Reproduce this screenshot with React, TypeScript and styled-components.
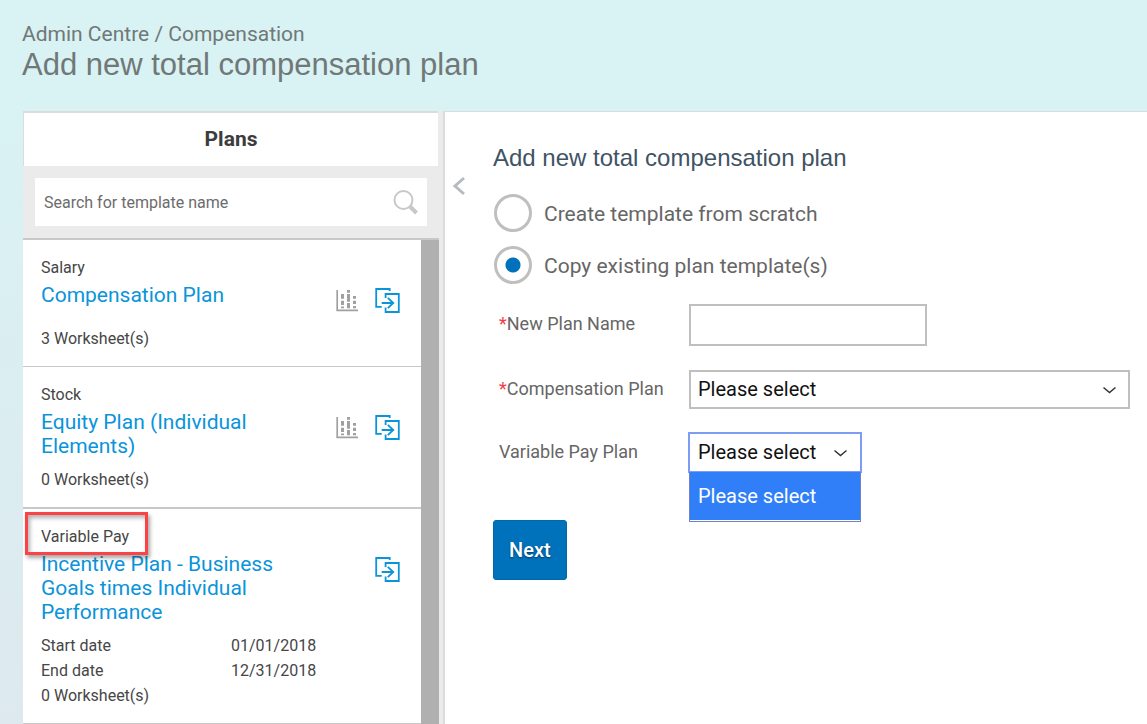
import React, { useState } from "react";
import styled, { createGlobalStyle, css } from "styled-components";

const GlobalStyle = createGlobalStyle`
  *, *::before, *::after { box-sizing: border-box; }
  body { margin: 0; background: #d9f2f3; }
  body, button, input, select { font-family: Roboto, "Liberation Sans", sans-serif; }
`;

const Page = styled.div`
  display: flex;
  flex-direction: column;
  min-height: 100vh;
  background: linear-gradient(#d9f2f3 0, #d9f2f3 112px, #dde9ee 724px);
`;

const PageHeader = styled.header`
  height: 111px;
  padding: 22px 22px 0;
  background: #d9f2f3;
  color: #707878;
`;

const Breadcrumb = styled.nav`
  font-size: 21px;
  line-height: 24px;
  a { color: inherit; text-decoration: none; }
`;

const PageTitle = styled.h1`
  margin: 0;
  font: 400 31px/38px "Liberation Sans", sans-serif;
`;

const Body = styled.div`
  display: flex;
  flex: 1;
  margin-left: 23px;
`;

const Sidebar = styled.aside`
  flex: 0 0 422px;
  padding-right: 4px;
  background: #ebebeb;
  border-right: 2px solid #dcdcdc;
  border-radius: 2px 0 0 0;
  display: flex;
  flex-direction: column;
`;

const SidebarTitle = styled.h2`
  margin: 0 1px 0 0;
  border-top: 2px solid #dcdcdc;
  border-left: 1px solid #dcdcdc;
  background: #fff;
  text-align: center;
  font-size: 21px;
  line-height: 53px;
  font-weight: 700;
  color: #3c3c3c;
`;

const SearchArea = styled.div`
  padding: 12px;
  border-bottom: 2px solid #c8c8c8;
`;

const SearchBox = styled.label`
  display: flex;
  align-items: center;
  height: 48px;
  padding: 0 9px;
  background: #fff;
`;

const SearchInput = styled.input`
  flex: 1;
  min-width: 0;
  padding: 0;
  border: 0;
  outline: 0;
  font-size: 16px;
  background: transparent;
  &::placeholder { color: #6c6c6c; opacity: 1; }
`;

const ListFrame = styled.div`
  display: flex;
  flex: 1;
`;

const PlanList = styled.ul`
  flex: 1;
  margin: 0;
  padding: 0;
  list-style: none;
  background: #fff;
`;

const ScrollTrack = styled.div`
  width: 18px;
  background: #b0b0b0;
`;

const PlanCard = styled.li<{ $rule: number }>`
  padding: 16px 20px 15px 18px;
  border-bottom: ${(p) => p.$rule}px solid #c8c8c8;
  font-size: 16px;
  line-height: 25px;
  color: #464646;
`;

const PlanKind = styled.div<{ $marked?: boolean }>`
  position: relative;
  width: max-content;
  line-height: 24px;
  margin-bottom: 3px;
  ${(p) =>
    p.$marked &&
    css`
      &::after {
        content: "";
        position: absolute;
        inset: -13px -19px -6px -16px;
        border: 3px solid #fb4347;
        box-shadow: 2px 3px 4px rgba(0, 0, 0, 0.35), inset 2px 3px 4px rgba(0, 0, 0, 0.3);
      }
    `}
`;

const PlanHead = styled.div`
  display: flex;
  align-items: flex-start;
  justify-content: space-between;
  min-height: 34px;
  margin-bottom: 9px;
`;

const PlanLink = styled.a`
  max-width: 256px;
  font-size: 21px;
  line-height: 24px;
  color: #0a94da;
  text-decoration: none;
`;

const Actions = styled.div`
  display: flex;
  gap: 16px;
  padding-top: 4px;
`;

const IconButton = styled.button`
  display: block;
  padding: 0;
  border: 0;
  background: none;
  svg { display: block; }
`;

const DateRow = styled.div`
  display: grid;
  grid-template-columns: 190px 1fr;
`;

const Main = styled.main`
  display: flex;
  align-items: flex-start;
  flex: 1;
  min-width: 0;
  background: #fff;
  border-top: 1px solid #d8dde0;
`;

const CollapseButton = styled(IconButton)`
  margin: 64px 28px 0 6px;
`;

const Content = styled.form`
  flex: 1;
  min-width: 0;
  padding: 30px 17px 0 0;
`;

const FormTitle = styled.h2`
  margin: 0 0 20px;
  font: 400 24px/32px "Liberation Sans", sans-serif;
  color: #405365;
`;

const RadioLabel = styled.label`
  display: flex;
  align-items: center;
  gap: 12px;
  height: 38px;
  margin: 0 0 14px 1px;
  font-size: 21px;
  line-height: 24px;
  color: #666;
`;

const RadioText = styled.span`
  padding-top: 2px;
`;

const Radio = styled.input`
  appearance: none;
  flex: none;
  width: 38px;
  height: 38px;
  margin: 0;
  border: 3px solid #bfbfbf;
  border-radius: 50%;
  background: #fff;
  &:checked { background: radial-gradient(circle, #0072bc 7px, #fff 8px); }
`;

const Fields = styled.div`
  display: grid;
  grid-template-columns: 190px 1fr;
  row-gap: 24px;
  align-items: center;
  padding: 6px 0 0 6px;
`;

const FieldLabel = styled.label`
  padding-bottom: 2px;
  font-size: 18px;
  line-height: 24px;
  color: #666;
`;

const Required = styled.span`
  color: #f43b4e;
`;

const TextInput = styled.input`
  width: 238px;
  height: 42px;
  padding: 0 8px;
  border: 2px solid #bfbfbf;
  font-size: 20px;
`;

const SelectWrap = styled.div<{ $compact?: boolean }>`
  position: relative;
  width: ${(p) => (p.$compact ? "172px" : "100%")};
`;

const Select = styled.select<{ $open?: boolean }>`
  appearance: none;
  display: block;
  width: 100%;
  height: 39px;
  padding: 0 7px 2px;
  border: 2px solid #bfbfbf;
  background: #fff;
  color: #111;
  font-size: 20px;
  ${(p) =>
    p.$open &&
    css`
      border: 1px solid #b4b4b4;
      padding: 0 8px 2px;
      outline: 2px solid #7f9cf5;
      outline-offset: -1px;
    `}
`;

const Chevron = styled.svg`
  position: absolute;
  right: 14px;
  top: 16px;
  pointer-events: none;
`;

const Menu = styled.div`
  position: absolute;
  top: 100%;
  left: 0;
  right: 0;
  padding-bottom: 1px;
  border: 1px solid #6f82c4;
  border-top: 0;
  background: #fff;
`;

const MenuOption = styled.button`
  display: block;
  width: 100%;
  height: 48px;
  padding: 0 8px;
  border: 0;
  background: #307ff8;
  color: #fff;
  font-size: 20px;
  text-align: left;
`;

const NextButton = styled.button`
  height: 60px;
  margin-top: 48px;
  padding: 0 15px;
  border: 1px solid #0069a8;
  border-radius: 3px;
  background: #0072bc;
  color: #fff;
  font-size: 20px;
  font-weight: 500;
  text-shadow: 0 1px 2px rgba(0, 0, 0, 0.5);
`;

const ChartIcon = () => (
  <svg width="23" height="26" viewBox="0 0 23 26" fill="none" stroke="#a0a0a0">
    <path d="M1.200 3v20.300H22" strokeWidth="1.700" />
    <path d="M6.500 7v4.700M6.500 13.800v4.200M6.500 19.500v1.700M12.500 3v2.700M12.500 7v7.700M12.500 16v5.200M18.500 9v2.700M18.500 13.700v3.300M18.500 19v2.200" strokeWidth="3" />
  </svg>
);

const CopyIcon = () => (
  <svg width="26" height="26" viewBox="0 0 26 26" fill="none" stroke="#0a94da" strokeWidth="1.800">
    <path d="M14.700 4V2H1.200v17.800H6.700M10.600 11V7H23.800V25H10.600v-4.500M6.700 16h11.300M12.800 10.800l5.500 5.200-5.500 5.200" />
  </svg>
);

const SearchIcon = () => (
  <svg width="26" height="26" viewBox="0 0 26 26" fill="none" stroke="#c8c8c8">
    <circle cx="11.500" cy="11" r="9" strokeWidth="2" />
    <path d="M18 17.500l6.500 6.500" strokeWidth="4" />
  </svg>
);

const SelectArrow = () => (
  <Chevron width="13" height="9" viewBox="0 0 13 9" fill="none" stroke="#333" aria-hidden="true">
    <path d="M.5 1.500l6 5 6-5" strokeWidth="1.500" />
  </Chevron>
);

type Plan = {
  kind: string;
  name: string;
  sheets: number;
  chart?: boolean;
  marked?: boolean;
  dates?: [string, string][];
  rule: number;
};

const plans: Plan[] = [
  { kind: "Salary", name: "Compensation Plan", sheets: 3, chart: true, rule: 1 },
  { kind: "Stock", name: "Equity Plan (Individual Elements)", sheets: 0, chart: true, rule: 2 },
  {
    kind: "Variable Pay",
    name: "Incentive Plan - Business Goals times Individual Performance",
    sheets: 0,
    marked: true,
    dates: [["Start date", "01/01/2018"], ["End date", "12/31/2018"]],
    rule: 1,
  },
];

export default function App() {
  const [mode, setMode] = useState("copy");
  const [open, setOpen] = useState(true);
  return (
    <Page>
      <GlobalStyle />
      <PageHeader>
        <Breadcrumb aria-label="Breadcrumb">
          <a href="#admin">Admin Centre</a> / <a href="#compensation">Compensation</a>
        </Breadcrumb>
        <PageTitle>Add new total compensation plan</PageTitle>
      </PageHeader>
      <Body>
        <Sidebar>
          <SidebarTitle>Plans</SidebarTitle>
          <SearchArea>
            <SearchBox>
              <SearchInput aria-label="Search for template name" placeholder="Search for template name" />
              <SearchIcon />
            </SearchBox>
          </SearchArea>
          <ListFrame>
            <PlanList>
              {plans.map((plan) => (
                <PlanCard key={plan.kind} $rule={plan.rule}>
                  <PlanKind $marked={plan.marked}>{plan.kind}</PlanKind>
                  <PlanHead>
                    <PlanLink href="#plan">{plan.name}</PlanLink>
                    <Actions>
                      {plan.chart && (
                        <IconButton type="button" aria-label="Statistics"><ChartIcon /></IconButton>
                      )}
                      <IconButton type="button" aria-label="Copy plan"><CopyIcon /></IconButton>
                    </Actions>
                  </PlanHead>
                  {plan.dates?.map(([label, value]) => (
                    <DateRow key={label}><span>{label}</span><span>{value}</span></DateRow>
                  ))}
                  <div>{plan.sheets} Worksheet(s)</div>
                </PlanCard>
              ))}
            </PlanList>
            <ScrollTrack />
          </ListFrame>
        </Sidebar>
        <Main>
          <CollapseButton type="button" aria-label="Collapse plans">
            <svg width="14" height="20" viewBox="0 0 14 20" fill="none" stroke="#b4bcc0" strokeWidth="3">
              <path d="M13 2L4 10l9 8" />
            </svg>
          </CollapseButton>
          <Content onSubmit={(e) => e.preventDefault()}>
            <FormTitle>Add new total compensation plan</FormTitle>
            <RadioLabel>
              <Radio type="radio" name="mode" checked={mode === "scratch"} onChange={() => setMode("scratch")} />
              <RadioText>Create template from scratch</RadioText>
            </RadioLabel>
            <RadioLabel>
              <Radio type="radio" name="mode" checked={mode === "copy"} onChange={() => setMode("copy")} />
              <RadioText>Copy existing plan template(s)</RadioText>
            </RadioLabel>
            <Fields>
              <FieldLabel htmlFor="plan-name"><Required>*</Required>New Plan Name</FieldLabel>
              <TextInput id="plan-name" />
              <FieldLabel htmlFor="comp-plan"><Required>*</Required>Compensation Plan</FieldLabel>
              <SelectWrap>
                <Select id="comp-plan"><option>Please select</option></Select>
                <SelectArrow />
              </SelectWrap>
              <FieldLabel htmlFor="variable-plan">Variable Pay Plan</FieldLabel>
              <SelectWrap $compact>
                <Select id="variable-plan" $open={open}><option>Please select</option></Select>
                <SelectArrow />
                {open && (
                  <Menu role="listbox" aria-label="Variable Pay Plan">
                    <MenuOption type="button" role="option" aria-selected="true" onClick={() => setOpen(false)}>
                      Please select
                    </MenuOption>
                  </Menu>
                )}
              </SelectWrap>
            </Fields>
            <NextButton type="submit">Next</NextButton>
          </Content>
        </Main>
      </Body>
    </Page>
  );
}
